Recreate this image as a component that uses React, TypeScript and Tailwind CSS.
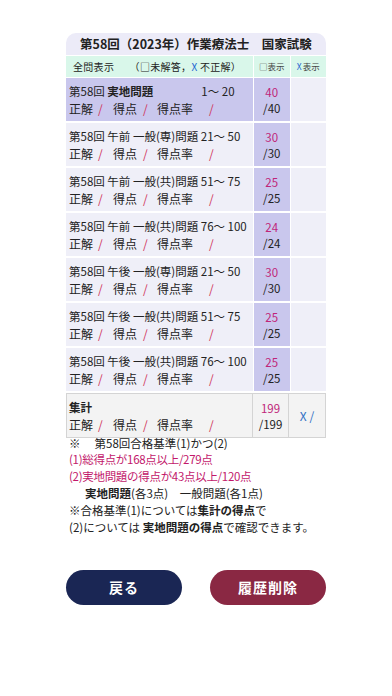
import React from 'react'

const FONT = { fontFamily: '"Noto Sans CJK JP", "Noto Sans", sans-serif' }

interface Row {
  title: React.ReactNode
  score: number
  total: number
  active?: boolean
}

const rows: Row[] = [
  {
    title: (
      <>
        第58回 <span className="font-bold">実地問題</span>
        <span className="inline-block ml-[48px]">1〜 20</span>
      </>
    ),
    score: 40,
    total: 40,
    active: true,
  },
  { title: '第58回 午前 一般(専)問題 21〜 50', score: 30, total: 30 },
  { title: '第58回 午前 一般(共)問題 51〜 75', score: 25, total: 25 },
  { title: '第58回 午前 一般(共)問題 76〜 100', score: 24, total: 24 },
  { title: '第58回 午後 一般(専)問題 21〜 50', score: 30, total: 30 },
  { title: '第58回 午後 一般(共)問題 51〜 75', score: 25, total: 25 },
  { title: '第58回 午後 一般(共)問題 76〜 100', score: 25, total: 25 },
]

function ScoreLine() {
  return (
    <div className="flex whitespace-pre text-[12px]">
      <span className="w-[29px]">正解</span>
      <span className="w-[15px] text-[#d0345a]">/</span>
      <span className="w-[30px]">得点</span>
      <span className="w-[14px] text-[#d0345a]">/</span>
      <span className="w-[52px]">得点率</span>
      <span className="text-[#d0345a]">/</span>
    </div>
  )
}

export default function App() {
  return (
    <div className="w-[392px] h-[696px] bg-white text-[#222]" style={FONT}>
      <div className="pt-[33px] px-[66px]">
        <div className="rounded-t-[10px] overflow-hidden">
          <div className="h-[22px] bg-[#ecebf8] flex items-center justify-center text-[12.5px] font-bold">
            第58回（2023年）作業療法士　国家試験
          </div>
          <div className="flex gap-px bg-white pt-px h-[22px]">
            <div className="w-[187px] bg-[#d9f7ea] flex items-center pl-[7px] text-[10px] whitespace-pre tracking-[0.3px]">
              全問表示 　 （□未解答，<span className="text-[#1f66d1]">X</span> 不正解）
            </div>
            <div className="flex-1 bg-[#d9f7ea] flex items-center justify-center text-[8.5px] text-[#444]">□表示</div>
            <div className="flex-1 bg-[#d9f7ea] flex items-center justify-center text-[8.5px] text-[#444]">
              <span className="text-[#1f66d1] mr-px">X</span>表示
            </div>
          </div>
        </div>

        <div className="flex flex-col gap-[2px] pt-px">
          {rows.map((r, i) => (
            <div key={i} className="flex h-[43px] gap-px">
              <div
                className={`w-[187px] pl-[3px] pt-[5px] text-[11.5px] leading-[17px] ${
                  r.active ? 'bg-[#c9c7ed]' : 'bg-[#efeff8]'
                }`}
              >
                <div className="whitespace-pre">{r.title}</div>
                <ScoreLine />
              </div>
              <div className="flex-1 bg-[#c9c7ed] flex flex-col items-center justify-center text-[11.5px] leading-[16px]">
                <span className="text-[#c0267a]">{r.score}</span>
                <span>/{r.total}</span>
              </div>
              <div className="flex-1 bg-[#efeff8]" />
            </div>
          ))}

          <div className="flex h-[45px] border border-[#d4d4d4] bg-[#f3f3f3]">
            <div className="w-[186px] pl-[2px] pt-[5px] text-[11.5px] leading-[17px] border-r border-[#d4d4d4]">
              <div className="font-bold">集計</div>
              <ScoreLine />
            </div>
            <div className="w-[36px] flex flex-col items-center justify-center text-[11.5px] leading-[16px] border-r border-[#d4d4d4]">
              <span className="text-[#c0267a]">199</span>
              <span>/199</span>
            </div>
            <div className="flex-1 flex items-center justify-center text-[12px] text-[#2f6fc4]">X /</div>
          </div>
        </div>

        <div className="pl-[3px] text-[11.5px]">
          <div className="whitespace-pre -mt-[2px] h-[15px] leading-[15px]">※　 第58回合格基準(1)かつ(2)</div>
          <div className="text-[#c2186b] h-[17px] leading-[17px] tracking-[-0.3px]">(1)総得点が168点以上/279点</div>
          <div className="text-[#c2186b] h-[17px] leading-[17px] tracking-[-0.3px]">(2)実地問題の得点が43点以上/120点</div>
          <div className="pl-[16px] whitespace-pre h-[17px] leading-[17px]">
            <span className="font-bold">実地問題</span>(各3点)　一般問題(各1点)
          </div>
          <div className="h-[17px] leading-[17px]">
            ※合格基準(1)については<span className="font-bold">集計の得点</span>で
          </div>
          <div className="h-[17px] leading-[17px]">
            (2)については <span className="font-bold">実地問題の得点</span>で確認できます。
          </div>
        </div>

        <div className="flex justify-between pt-[34px]">
          <button className="w-[116px] h-[35px] rounded-full bg-[#1a2654] text-white text-[14px] font-bold tracking-[1px]">
            戻る
          </button>
          <button className="w-[116px] h-[35px] rounded-full bg-[#8a2843] text-white text-[14px] font-bold tracking-[1px]">
            履歴削除
          </button>
        </div>
      </div>
    </div>
  )
}
